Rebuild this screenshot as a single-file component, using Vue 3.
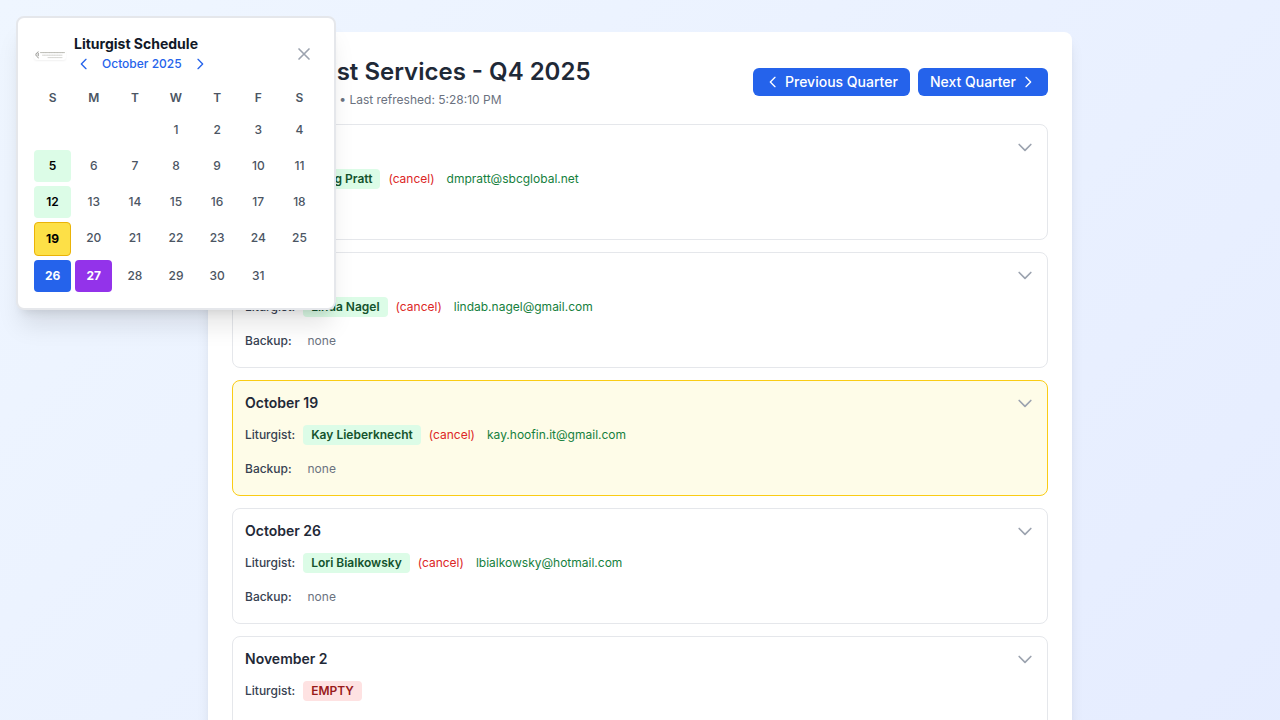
<script setup>
const weekdays = ['S', 'M', 'T', 'W', 'T', 'F', 'S']
const marks = { 5: 'filled', 12: 'filled', 19: 'next', 26: 'selected', 27: 'today' }
const days = Array.from({ length: 31 }, (_, i) => ({ n: i + 1, mark: marks[i + 1] || '' }))
const services = [
  { date: 'October 5', name: 'Doug Pratt', email: 'dmpratt@sbcglobal.net' },
  { date: 'October 12', name: 'Linda Nagel', email: 'lindab.nagel@gmail.com' },
  { date: 'October 19', name: 'Kay Lieberknecht', email: 'kay.hoofin.it@gmail.com', current: true },
  { date: 'October 26', name: 'Lori Bialkowsky', email: 'lbialkowsky@hotmail.com' },
  { date: 'November 2' },
]
</script>

<template>
  <div class="page">
    <main class="panel">
      <header class="top">
        <div class="heading">
          <h1>Liturgist Services - Q4 2025</h1>
          <p>• Last refreshed: 5:28:10 PM</p>
        </div>
        <div class="actions">
          <button class="btn">
            <svg width="16" height="16" viewBox="0 0 24 24"><path d="M15 19l-7-7 7-7" /></svg>
            <span>Previous Quarter</span>
          </button>
          <button class="btn">
            <span>Next Quarter</span>
            <svg width="16" height="16" viewBox="0 0 24 24"><path d="M9 5l7 7-7 7" /></svg>
          </button>
        </div>
      </header>

      <section v-for="s in services" :key="s.date" class="card" :class="{ current: s.current }">
        <div class="card-head">
          <h3>{{ s.date }}</h3>
          <svg width="20" height="20" viewBox="0 0 24 24"><path d="M19 9l-7 7-7-7" /></svg>
        </div>
        <div class="row">
          <span class="label">Liturgist:</span>
          <template v-if="s.name">
            <span class="pill">{{ s.name }}</span>
            <a class="cancel">(cancel)</a>
            <a class="email">{{ s.email }}</a>
          </template>
          <span v-else class="pill empty">EMPTY</span>
        </div>
        <div v-if="s.name" class="row">
          <span class="label backup">Backup:</span>
          <span class="none">none</span>
        </div>
      </section>
    </main>

    <aside class="calendar">
      <div class="cal-head">
        <svg class="logo" width="32" height="10" viewBox="0 0 32 10">
          <path d="M4.2 2C.8 3.6 1.2 5.6 4.4 7.8M4.2 3.4v2.4" stroke="#74746e" stroke-width=".8" />
          <path d="M6.5 2.6h24" stroke="#b5b5ae" stroke-width=".9" stroke-dasharray="3 .3 2 .3" />
          <path d="M8.5 5.2h20M14 7.6h14" stroke="#cdcdc8" stroke-width=".8" stroke-dasharray="2 .5" />
        </svg>
        <div class="cal-title">
          <h2>Liturgist Schedule</h2>
          <div class="month">
            <svg width="16" height="16" viewBox="0 0 24 24"><path d="M15 19l-7-7 7-7" /></svg>
            <span>October 2025</span>
            <svg width="16" height="16" viewBox="0 0 24 24"><path d="M9 5l7 7-7 7" /></svg>
          </div>
        </div>
        <svg class="close" width="20" height="20" viewBox="0 0 24 24"><path d="M6 18L18 6M6 6l12 12" /></svg>
      </div>
      <div class="grid">
        <div v-for="(d, i) in weekdays" :key="'w' + i" class="weekday">{{ d }}</div>
        <div v-for="d in days" :key="d.n" class="day" :class="[d.mark, { first: d.n === 1 }]">{{ d.n }}</div>
      </div>
    </aside>
  </div>
</template>

<style>
html, body { margin: 0; height: 720px; overflow: hidden; }
</style>

<style scoped>
* { box-sizing: border-box; }
h1, h2, h3, p { margin: 0; }
.page {
  position: relative;
  height: 720px;
  overflow: hidden;
  padding: 32px 208px 0;
  font-family: Inter, "Liberation Sans", sans-serif;
  font-size: 12px;
  line-height: 16px;
  color: #1f2937;
  background: linear-gradient(135deg, #eff6ff 0%, #e0e7ff 100%) 0 0 / 1280px 1850px no-repeat;
}
svg { display: block; flex: none; fill: none; stroke: currentColor; stroke-width: 2; stroke-linecap: round; stroke-linejoin: round; }
.panel {
  height: 900px;
  padding: 24px;
  background: #fff;
  border-radius: 8px;
  box-shadow: 0 10px 15px -3px rgba(0, 0, 0, .1), 0 4px 6px -4px rgba(0, 0, 0, .1);
}
.top { display: flex; justify-content: space-between; align-items: center; height: 52px; margin-bottom: 16px; }
.heading { width: 358.5px; text-align: right; white-space: nowrap; }
h1 { font-size: 24px; line-height: 32px; font-weight: 600; }
.heading p { margin-top: 4px; padding-right: 89px; color: #6b7280; }
.actions { display: flex; gap: 8px; }
.btn {
  display: flex; align-items: center; gap: 4px; height: 28px; padding: 0 12px;
  border: 0; border-radius: 6px; background: #2563eb; color: #fff;
  font: 500 14px/20px Inter, sans-serif;
}
.card { height: 116px; margin-bottom: 12px; padding: 12px; border: 1px solid #e5e7eb; border-radius: 8px; }
.card.current { background: #fefce8; border-color: #facc15; }
.card-head { display: flex; justify-content: space-between; align-items: center; height: 20px; margin-bottom: 8px; }
.card-head svg { color: #9ca3af; }
h3 { font-size: 14px; line-height: 20px; font-weight: 600; }
.row { display: flex; align-items: center; height: 28px; margin-bottom: 6px; }
.label { margin-right: 8px; font-weight: 500; color: #374151; }
.label.backup { width: 54.5px; }
.pill { padding: 2px 8px; border-radius: 4px; background: #dcfce7; color: #14532d; font-weight: 600; }
.pill.empty { background: #fee2e2; color: #991b1b; }
.cancel { margin-left: 8px; color: #dc2626; }
.email { margin-left: 12px; color: #15803d; }
.none { color: #6b7280; }
.calendar {
  position: absolute; left: 16px; top: 16px; width: 320px; height: 294px; padding: 16px;
  background: #fff; border: 2px solid #e5e7eb; border-radius: 8px;
  box-shadow: 0 20px 25px -5px rgba(0, 0, 0, .1), 0 8px 10px -6px rgba(0, 0, 0, .1);
}
.cal-head { display: flex; align-items: center; height: 40px; margin-bottom: 12px; }
.logo { margin: 2px 8px 0 0; border-radius: 3px; box-shadow: 0 1px 2px rgba(0, 0, 0, .06); }
.cal-title { flex: 1; }
h2 { font-size: 14px; line-height: 20px; font-weight: 700; color: #111827; }
.month { display: flex; align-items: center; gap: 10px; height: 20px; padding-left: 2px; color: #2563eb; font-weight: 500; }
.close { margin-right: 4px; color: #9ca3af; }
.grid { display: grid; grid-template-columns: repeat(7, 1fr); gap: 4px; align-items: start; text-align: center; }
.weekday { height: 24px; line-height: 24px; font-weight: 600; color: #4b5563; }
.day { padding: 8px 0; border-radius: 4px; font-weight: 500; color: #4b5563; }
.first { grid-column-start: 4; }
.filled { background: #dcfce7; color: #000; font-weight: 600; }
.next { background: #fde047; border: 1px solid #eab308; color: #000; font-weight: 700; }
.selected { background: #2563eb; color: #fff; font-weight: 700; }
.today { background: #9333ea; color: #fff; font-weight: 700; }
</style>
